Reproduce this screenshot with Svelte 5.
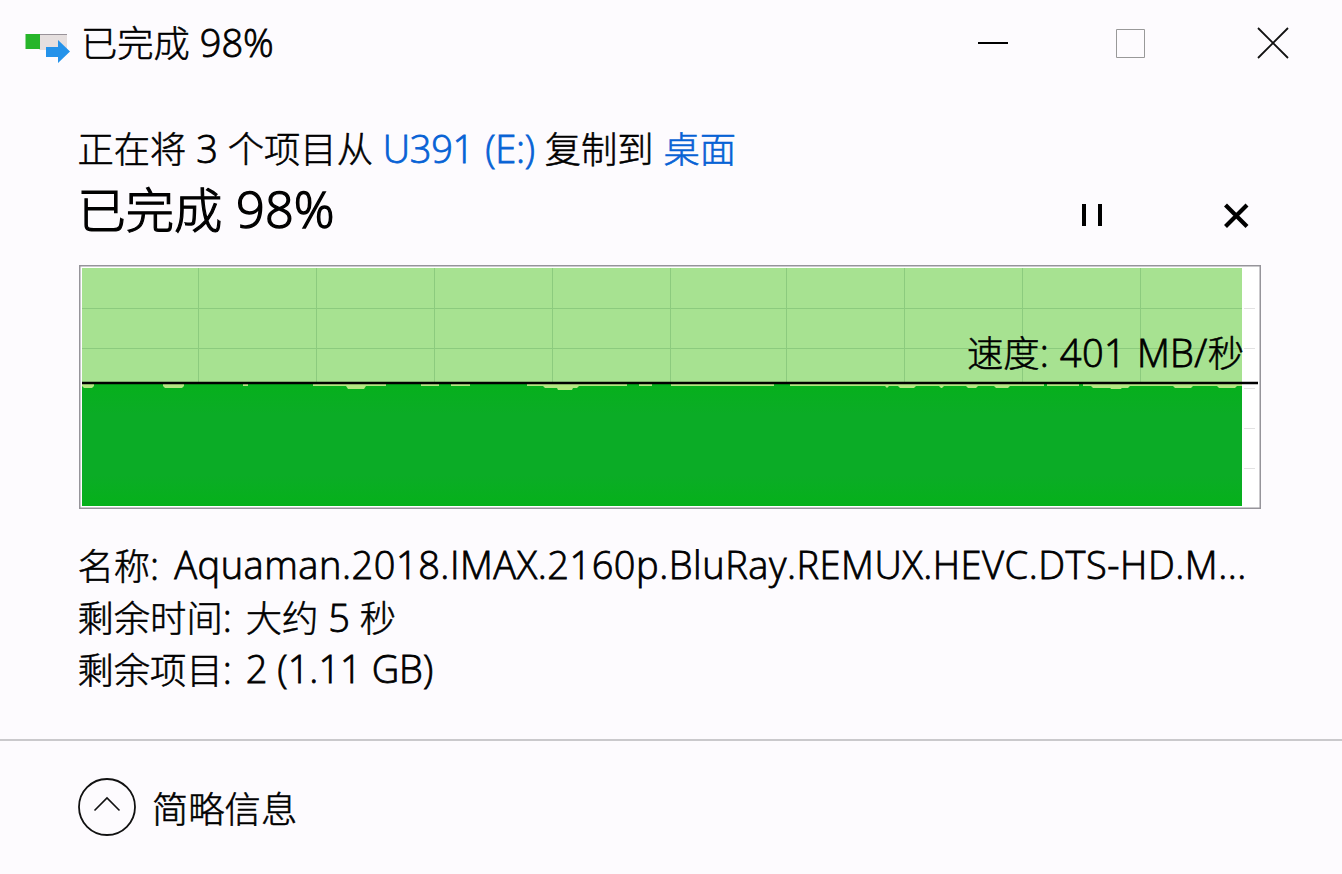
<script lang="ts">
    const progress = 98;
    const speed = 401;
    const fileName = 'Aquaman.2018.IMAX.2160p.BluRay.REMUX.HEVC.DTS-HD.M...';

    const columns = [119.5, 237.5, 355.5, 473.5, 591.5, 707.5, 825.5, 943.5, 1061.5];
    const rows = [43.5, 83.5, 123.5, 163.5, 203.5];

    // short drops in the transfer speed: start, end, depth
    const drops = [
        [3, 15, 4], [164, 169, 2], [234, 307, 2],
        [342, 360, 2], [372, 391, 2], [448, 548, 2], [560, 573, 2], [592, 695, 2],
        [711, 965, 2], [968, 1000, 2], [1004, 1163, 2], [84, 105, 4], [267, 287, 5],
        [464, 500, 4], [477, 495, 6], [806, 810, 4], [819, 837, 4], [860, 865, 4],
        [887, 899, 4], [915, 931, 4], [1012, 1051, 4], [1030, 1044, 5],
        [1094, 1114, 4], [1138, 1158, 4]
    ];

    const dropPath = ([from, to, depth]: number[]) =>
        depth < 3
            ? `M${from} 119H${to}V${119 + depth}H${from}Z`
            : `M${from} 119H${to}V121L${to - 2} ${119 + depth}H${from + 2}L${from} 121Z`;
</script>

<div class="window">
    <header>
        <svg class="app-icon" width="46" height="30" viewBox="0 0 46 30">
            <path d="M15 .5H43V16H15Z" fill="#e6dfdf"/>
            <path d="M14 .5H43" stroke="#999299"/>
            <path d="M1.5 0H16V15H1.5Z" fill="#27b52a"/>
            <path d="M22 13H34V6L46 17.5L34 29V23H22Z" fill="#2492ea"/>
        </svg>
        <h1>已完成 <span class="latin">{progress}%</span></h1>
        <nav>
            <button aria-label="最小化">
                <svg width="32" height="32" viewBox="0 0 32 32">
                    <path d="M1 16H31" stroke="#000" stroke-width="2"/>
                </svg>
            </button>
            <button aria-label="最大化" disabled>
                <svg width="36" height="32" viewBox="0 0 36 32">
                    <path d="M1.5 2.5H29.5V30.5H1.5Z" fill="none" stroke="#999"/>
                </svg>
            </button>
            <button aria-label="关闭">
                <svg width="32" height="32" viewBox="0 0 32 32">
                    <path d="M1 1L31 31M31 1L1 31" stroke="#111" stroke-width="1.8"/>
                </svg>
            </button>
        </nav>
    </header>

    <main>
        <p class="route">
            正在将 <span class="latin">3</span> 个项目从 <a href="#source" class="latin source">U391 (E:)</a> 复制到 <a href="#target">桌面</a>
        </p>
        <div class="status">
            <h2>已完成 <span class="latin">{progress}%</span></h2>
            <div class="actions">
                <button aria-label="暂停">
                    <svg width="28" height="28" viewBox="0 0 28 28">
                        <path d="M5 3V25M21 3V25" stroke="#000" stroke-width="4"/>
                    </svg>
                </button>
                <button aria-label="取消">
                    <svg width="28" height="28" viewBox="0 0 28 28">
                        <path d="M2.5 4L24 25.5M24 4L2.5 25.5" stroke="#000" stroke-width="4.2"/>
                    </svg>
                </button>
            </div>
        </div>

        <div class="chart">
            <svg width="1182" height="244" viewBox="0 0 1182 244">
                <defs>
                    <linearGradient id="fill" x1="0" y1="0" x2="0" y2="1">
                        <stop offset="0" stop-color="#06b01c"/>
                        <stop offset="0.25" stop-color="#0bac26"/>
                        <stop offset="0.75" stop-color="#0bac26"/>
                        <stop offset="1" stop-color="#05b11a"/>
                    </linearGradient>
                </defs>
                <path d="M.75 .75H1181.25V243.25H.75Z" fill="#fff" stroke="#96949a" stroke-width="1.5"/>
                {#each rows as y}
                    <path d="M1165 {y}H1176" stroke="#e2e2e2"/>
                {/each}
                <path d="M3 3H1163V119H3Z" fill="#a7e291"/>
                {#each rows.slice(0, 2) as y}
                    <path d="M3 {y}H1163" stroke="#8ccb7e"/>
                {/each}
                {#each columns as x}
                    <path d="M{x} 3V117" stroke="#8ccb7e"/>
                {/each}
                <path d="M3 119H1163V241H3Z" fill="url(#fill)"/>
                {#each drops as drop}
                    <path d={dropPath(drop)} fill="#b4e882"/>
                {/each}
                <path d="M3 118H1179" stroke="#000" stroke-width="2.4"/>
            </svg>
            <span class="speed">速度<span class="latin">: {speed} MB/</span>秒</span>
        </div>

        <dl>
            <div>
                <dt>名称<span class="latin">:</span></dt>
                <dd class="latin name">{fileName}</dd>
            </div>
            <div>
                <dt>剩余时间<span class="latin">:</span></dt>
                <dd>大约 <span class="latin">5</span> 秒</dd>
            </div>
            <div>
                <dt>剩余项目<span class="latin">:</span></dt>
                <dd class="latin items">2 (1.11 GB)</dd>
            </div>
        </dl>
    </main>

    <footer>
        <button class="toggle">
            <svg width="58" height="58" viewBox="0 0 58 58">
                <circle cx="29" cy="29" r="28" fill="none" stroke="#111" stroke-width="1.8"/>
                <path d="M16.5 32.5L29 20L41.5 32.5" fill="none" stroke="#111" stroke-width="1.6"/>
            </svg>
            <span>简略信息</span>
        </button>
    </footer>
</div>

<style>
    :global(body) {
        margin: 0;
        background: #fdfbfe;
    }

    .window {
        display: flex;
        flex-direction: column;
        box-sizing: border-box;
        width: 1342px;
        height: 874px;
        overflow: hidden;
        color: #000;
        background: #fdfbfe;
        font: 300 36.3px/52px "Noto Sans CJK SC", sans-serif;
        word-spacing: 1.8px;
        -webkit-text-stroke: 0.55px currentColor;
    }

    h1, h2, p, dl, dd {
        margin: 0;
        font-weight: inherit;
        font-size: inherit;
        white-space: nowrap;
    }

    button {
        display: flex;
        align-items: center;
        padding: 0;
        border: 0;
        background: none;
        color: inherit;
        font: inherit;
    }

    svg {
        display: block;
    }

    .latin {
        font-family: "Open Sans", "Noto Sans", sans-serif;
        font-weight: 300;
        font-size: 38px;
        line-height: 1;
        -webkit-text-stroke-width: 0.8px;
    }

    header {
        display: flex;
        align-items: center;
        height: 86px;
        padding: 0 53px 0 24px;
        box-sizing: border-box;
    }

    h1 {
        padding-bottom: 4px;
    }

    .app-icon {
        margin: 11px 11px 0 0;
    }

    nav {
        display: flex;
        gap: 106px;
        margin-left: auto;
    }

    main {
        padding: 35px 81px 0 79px;
    }

    .route, h2, dl {
        margin-left: -1.5px;
    }

    a {
        color: #0762d5;
        text-decoration: none;
    }

    .source {
        letter-spacing: -0.3px;
    }

    .status {
        display: flex;
        align-items: center;
        justify-content: space-between;
        height: 72px;
        margin-bottom: 20px;
    }

    h2 {
        padding-bottom: 2px;
        font-size: 48.3px;
        word-spacing: 3px;
        -webkit-text-stroke-width: 1.2px;
    }

    h2 .latin {
        font-size: 50.5px;
        -webkit-text-stroke-width: 1.4px;
    }

    .actions {
        display: flex;
        gap: 116px;
        margin: 12px 10px 0 0;
    }

    .chart {
        position: relative;
        height: 244px;
    }

    .speed {
        position: absolute;
        top: 60px;
        right: 17px;
        white-space: nowrap;
    }

    .speed .latin {
        letter-spacing: 0.4px;
        word-spacing: 0.5px;
    }

    dl {
        margin-top: 29px;
    }

    dl div {
        display: flex;
        gap: 14px;
        height: 52px;
    }

    dd.latin {
        line-height: 52px;
    }

    .name {
        margin-left: 1px;
        letter-spacing: 0.52px;
    }

    .items {
        word-spacing: 0;
    }

    footer {
        display: flex;
        align-items: center;
        flex: 1;
        margin-top: 45px;
        padding: 0 0 2px 78px;
        border-top: 2px solid #cac9cc;
    }

    .toggle {
        gap: 16px;
    }
</style>
